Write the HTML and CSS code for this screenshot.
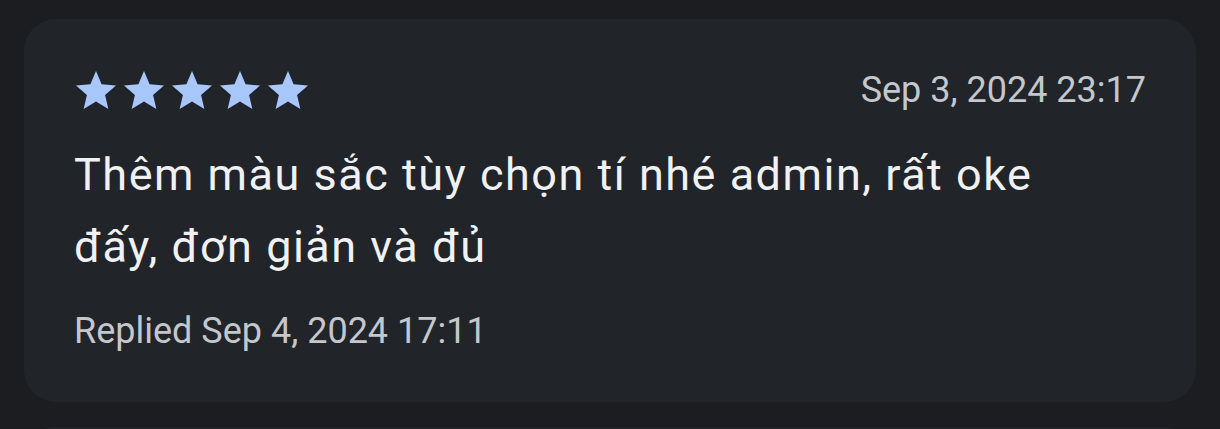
FILE: index.html
```html
<!DOCTYPE html>
<html lang="vi">
<head>
<meta charset="utf-8">
<title>Review</title>
<link rel="stylesheet" href="styles.css">
</head>
<body>
<div class="list">
  <div class="card">
    <div class="head">
      <div class="stars">
        <svg class="star" viewBox="0 0 24 24"><path d="M12 17.27L18.18 21l-1.64-7.03L22 9.24l-7.19-.61L12 2 9.19 8.63 2 9.24l5.46 4.73L5.82 21z"/></svg>
        <svg class="star" viewBox="0 0 24 24"><path d="M12 17.27L18.18 21l-1.64-7.03L22 9.24l-7.19-.61L12 2 9.19 8.63 2 9.24l5.46 4.73L5.82 21z"/></svg>
        <svg class="star" viewBox="0 0 24 24"><path d="M12 17.27L18.18 21l-1.64-7.03L22 9.24l-7.19-.61L12 2 9.19 8.63 2 9.24l5.46 4.73L5.82 21z"/></svg>
        <svg class="star" viewBox="0 0 24 24"><path d="M12 17.27L18.18 21l-1.64-7.03L22 9.24l-7.19-.61L12 2 9.19 8.63 2 9.24l5.46 4.73L5.82 21z"/></svg>
        <svg class="star" viewBox="0 0 24 24"><path d="M12 17.27L18.18 21l-1.64-7.03L22 9.24l-7.19-.61L12 2 9.19 8.63 2 9.24l5.46 4.73L5.82 21z"/></svg>
      </div>
      <div class="date">Sep 3, 2024 23:17</div>
    </div>
    <p class="body">Thêm màu sắc tùy chọn tí nhé admin, rất oke đấy, đơn giản và đủ</p>
    <div class="reply">Replied Sep 4, 2024 17:11</div>
  </div>
  <div class="card next"></div>
</div>
</body>
</html>
```

FILE: styles.css
```css
html, body {
  margin: 0;
  padding: 0;
  background: #1b1d21;
}
body {
  padding: 19px 24px 0;
  font-family: Roboto, "Noto Sans", sans-serif;
}
.list {
  display: flex;
  flex-direction: column;
  gap: 25px;
}
.card {
  background: #212429;
  border-radius: 32px;
  padding: 50px 50px 47px;
}
.card.next {
  height: 200px;
  padding: 0;
}
.head {
  display: flex;
  justify-content: space-between;
  align-items: center;
  height: 42px;
}
.stars {
  display: flex;
  margin-left: -2px;
  margin-top: 2px;
}
.star {
  width: 48px;
  height: 48px;
  fill: #a8c7fa;
}
.date {
  color: #c4c7cc;
  font-size: 36px;
}
.body {
  margin: 28px 0 0;
  color: #eff1f3;
  font-size: 45px;
  line-height: 72px;
  letter-spacing: 1.5px;
  max-width: 1000px;
}
.reply {
  margin-top: 24px;
  color: #c4c7cc;
  font-size: 36px;
  line-height: 48px;
}
```
